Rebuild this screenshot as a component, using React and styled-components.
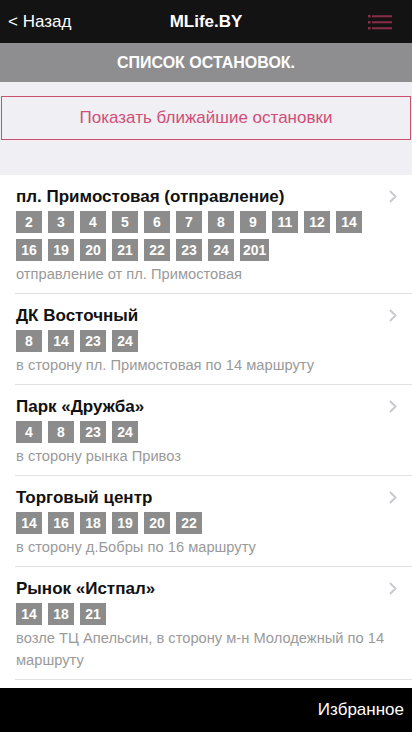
import React from 'react';
import styled, { createGlobalStyle } from 'styled-components';

const GlobalStyle = createGlobalStyle`
  * { box-sizing: border-box; }
  body {
    margin: 0;
    font-family: 'Liberation Sans', Arial, sans-serif;
    background: #fff;
  }
`;

const stops = [
  {
    name: 'пл. Примостовая (отправление)',
    routes: ['2', '3', '4', '5', '6', '7', '8', '9', '11', '12', '14', '16', '19', '20', '21', '22', '23', '24', '201'],
    note: 'отправление от пл. Примостовая',
  },
  {
    name: 'ДК Восточный',
    routes: ['8', '14', '23', '24'],
    note: 'в сторону пл. Примостовая по 14 маршруту',
  },
  {
    name: 'Парк «Дружба»',
    routes: ['4', '8', '23', '24'],
    note: 'в сторону рынка Привоз',
  },
  {
    name: 'Торговый центр',
    routes: ['14', '16', '18', '19', '20', '22'],
    note: 'в сторону д.Бобры по 16 маршруту',
  },
  {
    name: 'Рынок «Истпал»',
    routes: ['14', '18', '21'],
    note: 'возле ТЦ Апельсин, в сторону м-н Молодежный по 14 маршруту',
  },
];

const Page = styled.div`
  height: 732px;
  display: flex;
  flex-direction: column;
  overflow: hidden;
`;

const TopBar = styled.header`
  height: 43px;
  background: #131313;
  color: #fff;
  display: grid;
  grid-template-columns: 1fr auto 1fr;
  align-items: center;
  padding: 0 8px;
`;

const BackLink = styled.span`
  font-size: 17px;
  justify-self: start;
`;

const Brand = styled.span`
  font-size: 17px;
  font-weight: bold;
`;

const MenuButton = styled.span`
  justify-self: end;
  display: flex;
  margin-right: 12px;
`;

const SectionTitle = styled.div`
  height: 39px;
  background: #8e8e90;
  color: #fff;
  font-size: 16px;
  font-weight: bold;
  display: flex;
  align-items: center;
  justify-content: center;
`;

const ActionArea = styled.div`
  background: #efeff4;
  padding: 14px 1px 35px 1px;
`;

const NearbyButton = styled.button`
  width: 100%;
  height: 44px;
  background: #efeff4;
  border: 1px solid #c9506f;
  color: #cf4e77;
  font-family: inherit;
  font-size: 17px;
  display: flex;
  align-items: center;
  justify-content: center;
`;

const StopList = styled.ul`
  flex: 1;
  list-style: none;
  margin: 0;
  padding: 0;
  background: #fff;
`;

const StopItem = styled.li`
  position: relative;
  margin-left: 15px;
  padding: 12px 10px 8px 1px;
  border-bottom: 1px solid #e2e2e4;
`;

const StopName = styled.div`
  font-size: 17px;
  font-weight: bold;
  line-height: 20px;
  color: #111;
`;

const Routes = styled.div`
  display: flex;
  flex-wrap: wrap;
  gap: 6px;
  margin: 4px 0 2px;
  width: 370px;
`;

const Route = styled.span`
  min-width: 26px;
  height: 22px;
  padding: 0 3px;
  background: #8c8c8c;
  color: #fff;
  font-size: 14px;
  font-weight: bold;
  display: flex;
  align-items: center;
  justify-content: center;
`;

const Note = styled.div`
  font-size: 14.7px;
  line-height: 22px;
  color: #9a9a9a;
`;

const Chevron = styled.svg`
  position: absolute;
  right: 15px;
  top: 15px;
`;

const BottomBar = styled.footer`
  height: 44px;
  background: #000;
  color: #fff;
  font-size: 17px;
  display: flex;
  align-items: center;
  justify-content: flex-end;
  padding: 0 8px;
`;

function MenuIcon() {
  return (
    <svg width="24" height="16" viewBox="0 0 24 16">
      {[2, 8, 14].map((y) => (
        <g key={y} fill="#8a2c48">
          <rect x="0" y={y - 1} width="2.5" height="2.5" />
          <rect x="4" y={y - 0.75} width="20" height="2" />
        </g>
      ))}
    </svg>
  );
}

export default function App() {
  return (
    <Page>
      <GlobalStyle />
      <TopBar>
        <BackLink>&lt; Назад</BackLink>
        <Brand>MLife.BY</Brand>
        <MenuButton>
          <MenuIcon />
        </MenuButton>
      </TopBar>
      <SectionTitle>СПИСОК ОСТАНОВОК.</SectionTitle>
      <ActionArea>
        <NearbyButton>Показать ближайшие остановки</NearbyButton>
      </ActionArea>
      <StopList>
        {stops.map((stop) => (
          <StopItem key={stop.name}>
            <StopName>{stop.name}</StopName>
            <Routes>
              {stop.routes.map((r) => (
                <Route key={r}>{r}</Route>
              ))}
            </Routes>
            <Note>{stop.note}</Note>
            <Chevron width="8" height="13" viewBox="0 0 8 13">
              <path d="M1 1l5.5 5.5L1 12" fill="none" stroke="#c7c7cc" strokeWidth="1.8" />
            </Chevron>
          </StopItem>
        ))}
      </StopList>
      <BottomBar>Избранное</BottomBar>
    </Page>
  );
}
